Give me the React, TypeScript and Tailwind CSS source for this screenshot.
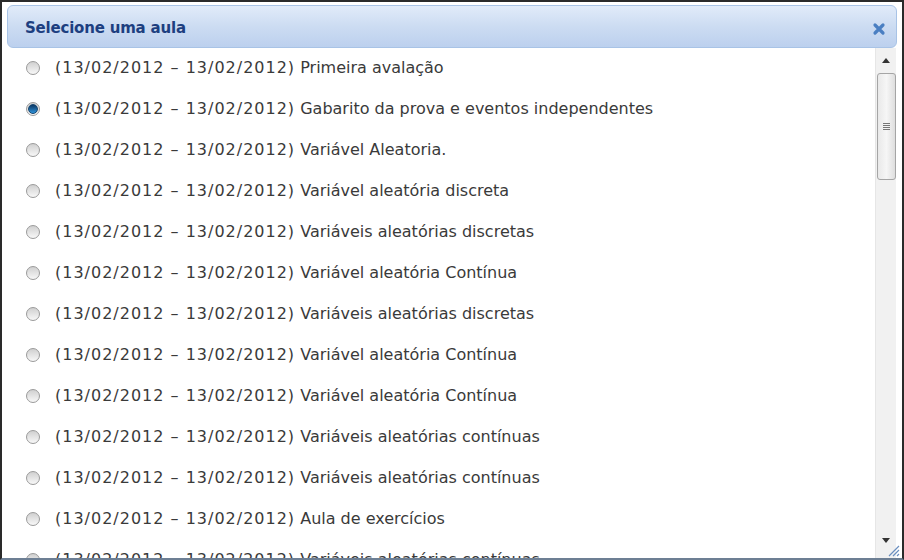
import React from 'react';

const aulas = [
  'Primeira avalação',
  'Gabarito da prova e eventos independentes',
  'Variável Aleatoria.',
  'Variável aleatória discreta',
  'Variáveis aleatórias discretas',
  'Variável aleatória Contínua',
  'Variáveis aleatórias discretas',
  'Variável aleatória Contínua',
  'Variável aleatória Contínua',
  'Variáveis aleatórias contínuas',
  'Variáveis aleatórias contínuas',
  'Aula de exercícios',
  'Variáveis aleatórias contínuas',
];

function Radio({ checked }: { checked: boolean }) {
  return (
    <span className="w-[14px] h-[14px] rounded-full border border-[#9a9a9a] bg-gradient-to-b from-[#d0d0d0] to-[#f8f8f8] flex items-center justify-center shrink-0">
      {checked && (
        <span className="w-[10px] h-[10px] rounded-full bg-gradient-to-b from-[#0b3763] to-[#2f94dc] border border-[#14446f]" />
      )}
    </span>
  );
}

export default function App() {
  return (
    <div className="w-[904px] h-[560px] bg-white border-2 border-[#2a2a2a] border-b-[#6d7f94] overflow-hidden flex flex-col font-['DejaVu_Sans',Verdana,sans-serif]">
      {/* Header */}
      <div className="pt-[3px] px-[5px]">
        <div className="h-[43px] rounded-[6px] border border-[#a8c3e6] bg-gradient-to-b from-[#e1ebf9] via-[#ccdcf2] to-[#bcd0ee] flex items-center justify-between pl-[17px] pr-[10px] pt-[4px]">
          <span className="text-[15px] font-bold text-[#1d3f80] tracking-[-0.2px]">Selecione uma aula</span>
          <svg width="14" height="14" viewBox="0 0 14 14">
            <path d="M3 3 L11 11 M11 3 L3 11" stroke="#4a7fc2" strokeWidth="3.2" strokeLinecap="round" />
          </svg>
        </div>
      </div>

      {/* Body */}
      <div className="flex flex-1 min-h-0 pr-[6px]">
        <div className="flex-1 overflow-hidden -mt-[1px]">
          {aulas.map((a, i) => (
            <div key={i} className="h-[41px] flex items-center pl-[24px] gap-[15px]">
              <Radio checked={i === 1} />
              <span className="text-[16px] text-[#3a3a3a] whitespace-nowrap">
                <span className="tracking-[1px]">(13/02/2012 – 13/02/2012)</span> {a}
              </span>
            </div>
          ))}
        </div>

        {/* Scrollbar */}
        <div className="w-[21px] bg-[#f1f1f1] border-l border-[#e6e6e6] flex flex-col items-center relative">
          <div className="h-[25px] flex items-center justify-center">
            <svg width="8" height="5" viewBox="0 0 8 5"><path d="M0 5 L4 0 L8 5 Z" fill="#333" /></svg>
          </div>
          <div className="w-[19px] h-[107px] rounded-[3px] border border-[#a5a5a5] bg-gradient-to-r from-[#e9e9e9] via-[#f6f6f6] to-[#dedede] flex flex-col items-center justify-center gap-[1px]">
            <span className="w-[7px] h-[1px] bg-[#777]" />
            <span className="w-[7px] h-[1px] bg-[#777]" />
            <span className="w-[7px] h-[1px] bg-[#777]" />
            <span className="w-[7px] h-[1px] bg-[#777]" />
          </div>
          <div className="flex-1" />
          <div className="h-[20px] flex items-start justify-center">
            <svg width="8" height="5" viewBox="0 0 8 5"><path d="M0 0 L8 0 L4 5 Z" fill="#333" /></svg>
          </div>
          <svg className="absolute right-[-4px] bottom-[1px]" width="14" height="14" viewBox="0 0 14 14">
            <path d="M13 3 L3 13 M13 7 L7 13 M13 11 L11 13" stroke="#6a8fbf" strokeWidth="1.2" />
          </svg>
        </div>
      </div>
    </div>
  );
}
